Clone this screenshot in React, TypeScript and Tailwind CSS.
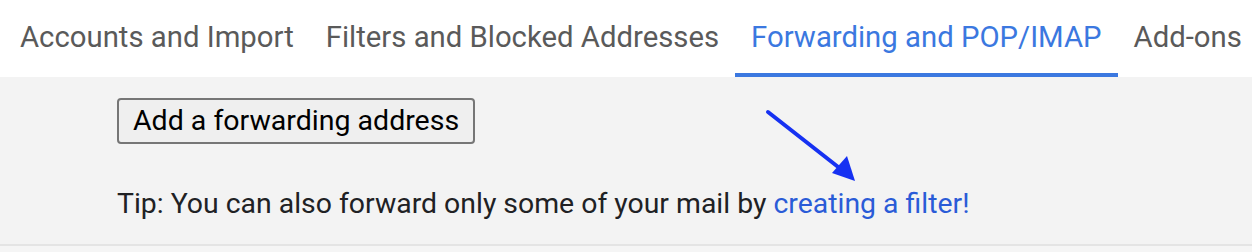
const tabs = [
  { label: "Accounts and Import", active: false },
  { label: "Filters and Blocked Addresses", active: false },
  { label: "Forwarding and POP/IMAP", active: true },
  { label: "Add-ons", active: false },
];

export default function App() {
  return (
    <div className="w-[1252px] h-[252px] overflow-hidden bg-white font-['Roboto',sans-serif]">
      <nav className="flex h-[77px] pl-1">
        {tabs.map((t) => (
          <div
            key={t.label}
            className={
              t.active
                ? "flex items-center whitespace-nowrap px-4 pt-[2px] text-[29.3px] text-[#3b78e0] border-b-4 border-[#3b78e0]"
                : "flex items-center whitespace-nowrap px-4 pt-[2px] text-[29.3px] text-[#5a5a5a] border-b-4 border-transparent"
            }
          >
            {t.label}
          </div>
        ))}
      </nav>

      <div className="relative h-[169px] bg-[#f3f3f3] border-b-2 border-[#e4e4e4] pl-[117px] pt-[21px]">
        <button className="h-[46px] px-[14px] bg-[#efefef] border-2 border-[#767676] rounded-[4px] text-[28.5px] text-black leading-none">
          Add a forwarding address
        </button>
        <p className="mt-[43px] text-[28.4px] leading-[34px] text-[#202124] whitespace-nowrap">
          Tip: You can also forward only some of your mail by{" "}
          <a className="text-[#2a5bd7]">creating a filter!</a>
        </p>

        {/* annotation arrow */}
        <svg
          className="absolute left-[760px] top-[27px]"
          width="110"
          height="90"
          viewBox="0 0 110 90"
        >
          <line x1="8" y1="8" x2="82" y2="66" stroke="#1631f2" strokeWidth="4" strokeLinecap="round" />
          <polygon points="95,77 72,69 87,52" fill="#1631f2" />
        </svg>
      </div>
      <div className="h-[6px] bg-[#f5f5f5]" />
    </div>
  );
}
